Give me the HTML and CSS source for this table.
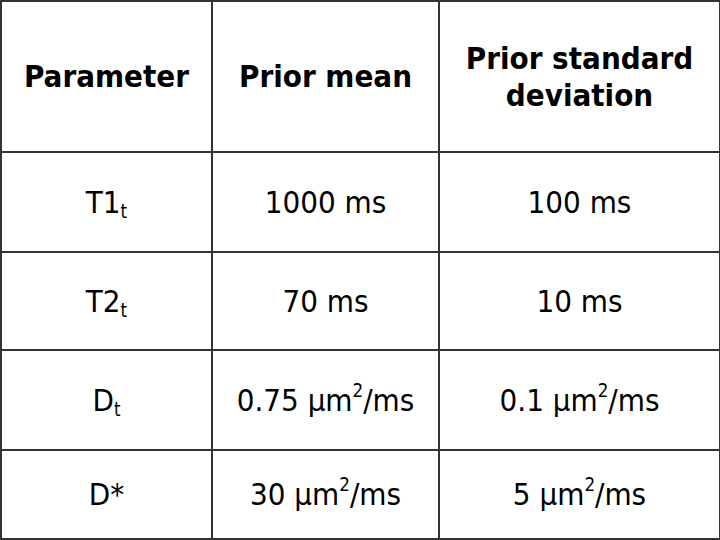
FILE: index.html
```html
<!DOCTYPE html>
<html lang="en">
<head>
    <meta charset="UTF-8">
    <meta name="viewport" content="width=device-width, initial-scale=1.0">
    <title>Prior parameters</title>
    <link rel="stylesheet" href="styles.css">
</head>
<body>
    <table class="priors">
        <colgroup>
            <col class="col-param">
            <col class="col-mean">
            <col class="col-sd">
        </colgroup>
        <thead>
            <tr class="head-row">
                <th>Parameter</th>
                <th>Prior mean</th>
                <th>Prior standard deviation</th>
            </tr>
        </thead>
        <tbody>
            <tr class="row-a">
                <td>T1<sub>t</sub></td>
                <td>1000 ms</td>
                <td>100 ms</td>
            </tr>
            <tr class="row-b">
                <td>T2<sub>t</sub></td>
                <td>70 ms</td>
                <td>10 ms</td>
            </tr>
            <tr class="row-a">
                <td>D<sub>t</sub></td>
                <td>0.75 μm<sup>2</sup>/ms</td>
                <td>0.1 μm<sup>2</sup>/ms</td>
            </tr>
            <tr class="row-last">
                <td>D*</td>
                <td>30 μm<sup>2</sup>/ms</td>
                <td>5 μm<sup>2</sup>/ms</td>
            </tr>
        </tbody>
    </table>
</body>
</html>
```

FILE: styles.css
```css
html, body {
    margin: 0;
    padding: 0;
    background: #ffffff;
}

body {
    width: 720px;
    height: 540px;
    overflow: hidden;
    font-family: "DejaVu Sans", "Liberation Sans", sans-serif;
    font-stretch: condensed;
    color: #000000;
}

.priors {
    width: 719px;
    border-collapse: collapse;
    table-layout: fixed;
}

.col-param {
    width: 211px;
}

.col-mean {
    width: 227px;
}

.col-sd {
    width: 281px;
}

.priors th,
.priors td {
    border: 2px solid #333333;
    text-align: center;
    vertical-align: middle;
    padding: 0 10px;
    font-size: 31px;
    line-height: 37px;
}

.priors th {
    font-weight: bold;
}

.head-row {
    height: 151px;
}

.row-a {
    height: 100px;
}

.row-b {
    height: 98px;
}

.row-last {
    height: 89px;
}

sub {
    font-size: 60%;
    vertical-align: -0.25em;
    line-height: 0;
}

sup {
    font-size: 60%;
    vertical-align: 0.75em;
    line-height: 0;
}
```
